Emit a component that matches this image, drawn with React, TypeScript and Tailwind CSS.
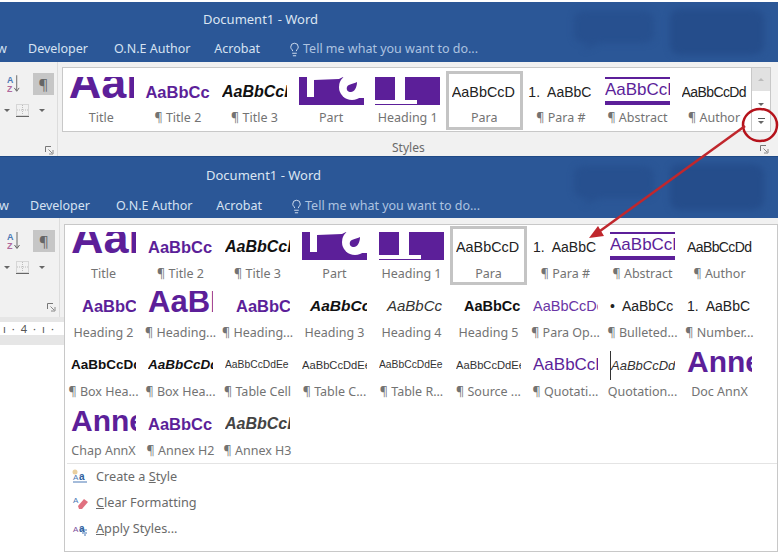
import React from "react";
import { Lightbulb } from "lucide-react";

type Style = { label: string; text?: string; cls?: string; swatch?: "part" | "heading1" | "abstract"; selected?: boolean };

const purple = "text-[#5c1f99]";

const PartSwatch = () => (
  <svg width="65" height="28" viewBox="0 0 65 28" className="block">
    <path d="M0 0H8V20H15V3L40 2L44 0H65V28H0Z" fill="#5c1f99" />
    <path d="M44 0H65V21H60Z" fill="#fff" />
    <circle cx="53" cy="10" r="13" fill="#fff" />
    <path d="M58 5C58 11 55 15 52 15C49 15 47 13 48 10C49 7 54 7 58 5Z" fill="#5c1f99" />
  </svg>
);

const Heading1Swatch = () => (
  <svg width="65" height="28" viewBox="0 0 65 28" className="block">
    <rect width="65" height="28" fill="#5c1f99" />
    <rect x="20" width="10" height="24" fill="#fff" />
    <rect y="23" width="42" height="4" fill="#fff" />
  </svg>
);

const row1: Style[] = [
  { label: "Title", text: "AaBbCc", cls: `text-[45px] font-bold -mt-[9px] ${purple}` },
  { label: "¶ Title 2", text: "AaBbCc", cls: `text-[16.5px] font-bold ${purple}` },
  { label: "¶ Title 3", text: "AaBbCcDd", cls: "text-[16px] font-bold italic text-[#111]" },
  { label: "Part", swatch: "part" },
  { label: "Heading 1", swatch: "heading1" },
  { label: "Para", text: "AaBbCcD", cls: "text-[14.4px] text-[#222]", selected: true },
  { label: "¶ Para #", text: "1.  AaBbC", cls: "text-[14px] text-[#222] whitespace-pre" },
  { label: "¶ Abstract", swatch: "abstract" },
  { label: "¶ Author", text: "AaBbCcDd", cls: "text-[14px] tracking-[-0.6px] text-[#222]" },
];

const row2: Style[] = [
  { label: "Heading 2", text: "AaBbC", cls: `pl-[11px] text-[16.5px] font-bold ${purple}` },
  { label: "¶ Heading...", text: "AaBbCc", cls: `text-[31px] font-bold -mt-[4px] ${purple}` },
  { label: "¶ Heading...", text: "AaBbC", cls: `pl-[11px] text-[16.5px] font-bold ${purple}` },
  { label: "Heading 3", text: "AaBbCc", cls: "pl-[8px] text-[15.5px] font-bold italic text-[#111]" },
  { label: "Heading 4", text: "AaBbCc", cls: "pl-[8px] text-[15px] italic text-[#333]" },
  { label: "Heading 5", text: "AaBbCc", cls: "pl-[8px] text-[14.5px] font-bold text-[#111]" },
  { label: "¶ Para Op...", text: "AaBbCcDd", cls: "text-[14.5px] text-[#6a35a5]" },
  { label: "¶ Bulleted...", text: "•  AaBbCc", cls: "text-[14px] text-[#222] whitespace-pre" },
  { label: "¶ Number...", text: "1.  AaBbC", cls: "text-[14px] text-[#222] whitespace-pre" },
];

const row3: Style[] = [
  { label: "¶ Box Hea...", text: "AaBbCcDd", cls: "text-[13.5px] font-bold text-[#111]" },
  { label: "¶ Box Hea...", text: "AaBbCcDd", cls: "text-[13.5px] font-bold italic text-[#111]" },
  { label: "¶ Table Cell", text: "AaBbCcDdEe", cls: "text-[10.3px] text-[#333]" },
  { label: "¶ Table C...", text: "AaBbCcDdEe", cls: "text-[11.2px] text-[#333]" },
  { label: "¶ Table R...", text: "AaBbCcDdEe", cls: "text-[10.3px] text-[#333]" },
  { label: "¶ Source ...", text: "AaBbCcDdEe", cls: "text-[11.2px] text-[#333]" },
  { label: "¶ Quotati...", text: "AaBbCcDd", cls: `text-[17px] ${purple}` },
  { label: "Quotation...", text: "AaBbCcDdE", cls: "border-l border-[#333] text-[13px] italic leading-[22px] mt-[1px] text-[#333]" },
  { label: "Doc AnnX", text: "Anne", cls: `text-[30px] font-bold -mt-[3px] ${purple}` },
];

const row4: Style[] = [
  { label: "Chap AnnX", text: "Anne", cls: `text-[30px] font-bold -mt-[3px] ${purple}` },
  { label: "¶ Annex H2", text: "AaBbCc", cls: `text-[16.5px] font-bold ${purple}` },
  { label: "¶ Annex H3", text: "AaBbCcDd", cls: "text-[16px] font-bold italic text-[#444]" },
];

const StyleTile = ({ item, labelGap }: { item: Style; labelGap: string }) => (
  <div className={`h-[59px] border-[3px] pt-[3px] ${item.selected ? "border-[#c4c4c4]" : "border-transparent"}`}>
    <div className="mx-auto h-[30px] w-[65px] overflow-hidden whitespace-nowrap font-['Liberation_Sans',sans-serif]">
      {item.swatch === "part" && <PartSwatch />}
      {item.swatch === "heading1" && <Heading1Swatch />}
      {item.swatch === "abstract" && (
        <div className={`h-[28px] border-t-2 border-b-4 border-[#5c1f99] text-[17px] leading-[22px] ${purple}`}>AaBbCcDd</div>
      )}
      {item.text && <div className={`leading-[30px] ${item.cls}`}>{item.text}</div>}
    </div>
    <div className={`h-[20px] whitespace-nowrap text-center text-[12.5px] leading-[20px] text-[#737373] ${labelGap}`}>{item.label}</div>
  </div>
);

const Launcher = () => (
  <svg width="9" height="9" viewBox="0 0 9 9" className="block">
    <path d="M.5 6V.5H6" fill="none" stroke="#777" />
    <path d="M3.5 3.5L7 7M8 4V8H4" fill="none" stroke="#888" />
  </svg>
);

const Caret = () => <span className="block h-0 w-0 border-x-[3px] border-t-[3px] border-x-transparent border-t-[#666]" />;

const SortIcon = () => (
  <svg width="14" height="20" viewBox="0 0 14 20" className="block">
    <text x="0" y="9" fontSize="9" fontWeight="700" fill="#4a79b5" fontFamily="Liberation Sans">A</text>
    <text x="0" y="18" fontSize="9" fontWeight="700" fill="#b0699c" fontFamily="Liberation Sans">Z</text>
    <path d="M10 1V17M7.5 14L10 17.5L12.5 14" fill="none" stroke="#666" />
  </svg>
);

const BorderIcon = () => (
  <svg width="13" height="13" viewBox="0 0 13 13" className="block">
    <rect x=".5" y=".5" width="12" height="11" fill="none" stroke="#bbb" strokeDasharray="1 1" />
    <path d="M6.5 1V11M1 6H12" stroke="#bbb" strokeDasharray="1 1" />
    <path d="M0 12.5H13" stroke="#666" />
  </svg>
);

const LeftTools = ({ pad, width, launcherGap }: { pad: string; width: string; launcherGap: string }) => (
  <div className={`flex h-full flex-col border-r border-[#dcdcdc] pr-[3px] ${pad} ${width}`}>
    <div className="flex items-center gap-[12px]">
      <SortIcon />
      <div className="flex h-[22px] w-[22px] items-center justify-center bg-[#c6c6c6] text-[15px] text-[#666]">¶</div>
    </div>
    <div className="mt-[9px] -ml-[3px] flex items-center gap-[6px]">
      <Caret />
      <BorderIcon />
      <span className="ml-[4px]">
        <Caret />
      </span>
    </div>
    <div className={`mt-auto self-end ${launcherGap}`}>
      <Launcher />
    </div>
  </div>
);

const Clouds = () => (
  <svg width="200" height="50" viewBox="0 0 200 50" className="absolute top-[6px] right-[8px] blur-[3px]">
    <path d="M4 12Q4 3 16 3H72Q84 3 84 12V26Q84 35 72 35H30L14 42L18 35Q4 35 4 26Z" fill="#27508f" />
    <path d="M100 10Q100 1 112 1H180Q194 1 194 12V36Q194 47 180 47H112Q100 47 100 36Z" fill="#254d8b" />
  </svg>
);

const BlueBar = ({ titlePad, tabPad, height, titleTop, tabTop }: { titlePad: string; tabPad: string; height: string; titleTop: string; tabTop: string }) => (
  <div className={`relative flex flex-col overflow-hidden bg-[#2b5797] ${height}`}>
    <Clouds />
    <div className={`relative text-[13px] leading-[20px] text-[#dbe5f2] ${titleTop} ${titlePad}`}>Document1 - Word</div>
    <div className={`relative flex items-center text-[12.5px] leading-[20px] text-[#d6e2f2] ${tabTop} ${tabPad}`}>
      <span className="w-[28px] -translate-x-[3px]">w</span>
      <span className="mr-[26px]">Developer</span>
      <span className="mr-[24px]">O.N.E Author</span>
      <span className="mr-[27px]">Acrobat</span>
      <Lightbulb size={15} strokeWidth={1.5} className="mr-px text-[#d6e2f2]" />
      <span className="text-[#adc3e0]">Tell me what you want to do...</span>
    </div>
  </div>
);

const GalleryScroll = () => (
  <div className="flex w-[19px] flex-col border border-l-0 border-[#c8c8c8] bg-white">
    <div className="flex h-[23px] items-center justify-center bg-[#e1e1e1]">
      <span className="h-0 w-0 border-x-[3px] border-b-[3px] border-x-transparent border-b-[#bbb]" />
    </div>
    <div className="flex h-[19px] items-end justify-center border-b border-[#c8c8c8] pb-[3px]">
      <Caret />
    </div>
    <div className="flex flex-1 flex-col items-center justify-center gap-[2px]">
      <span className="h-px w-[7px] bg-[#555]" />
      <Caret />
    </div>
  </div>
);

const MenuIcon = ({ kind }: { kind: "create" | "clear" | "apply" }) => (
  <svg width="16" height="16" viewBox="0 0 16 16" className="block">
    {kind === "create" && <circle cx="3" cy="3" r="2.5" fill="#e9cf9f" />}
    {kind === "clear" && <path d="M6 11L12 4L16 7L10 14H7Z" fill="#e0707f" />}
    {kind === "apply" && <path d="M9 9H15M10 12H15M12 14H14" stroke="#4a79b5" />}
    <text x="1" y={kind === "clear" ? 8 : 11} fontSize="8" fill={kind === "apply" ? "#7a4d9b" : "#4a79b5"} fontFamily="Liberation Sans">A</text>
    {kind !== "clear" && <text x="7" y="11" fontSize="10" fontWeight="700" fill="#2f5f9e" fontFamily="Liberation Sans">a</text>}
    {kind === "create" && <path d="M1 13H15" stroke="#4a79b5" />}
  </svg>
);

const MenuItem = ({ kind, children }: { kind: "create" | "clear" | "apply"; children: React.ReactNode }) => (
  <div className="flex h-[26px] items-center pl-[5px] text-[12.7px] text-[#6a6a6a]">
    <span className="mr-[8px] w-[16px]">
      <MenuIcon kind={kind} />
    </span>
    <span>{children}</span>
  </div>
);

export default function App() {
  return (
    <div className="relative h-[553px] w-[780px] overflow-hidden bg-white font-['Noto_Sans',sans-serif]">
      <div className="w-[778px] pt-[2px]">
        {/* first window, collapsed gallery */}
        <BlueBar height="h-[60px]" titleTop="pt-[7px]" tabTop="mt-[10px]" titlePad="pl-[203px]" tabPad="pl-0" />
        <div className="flex h-[95px] border-b border-[#1f4a86] bg-[#f1f1f1]">
          <LeftTools width="w-[58px]" pad="pl-[7px] pt-[11px]" launcherGap="mb-[1px]" />
          <div className="flex flex-1 flex-col">
            <div className="mt-[5px] ml-[4px] flex h-[65px]">
              <div className="grid w-[690px] grid-cols-[repeat(9,76.6px)] border border-[#c8c8c8] bg-white pt-[3px]">
                {row1.map((item) => (
                  <StyleTile key={item.label} item={item} labelGap="mt-px" />
                ))}
              </div>
              <GalleryScroll />
            </div>
            <div className="flex flex-1 items-end pr-[9px]">
              <div className="w-[334px]" />
              <span className="flex-1 text-[12px] leading-[16px] text-[#6a6a6a]">Styles</span>
              <div className="pb-[2px]">
                <Launcher />
              </div>
            </div>
          </div>
        </div>

        {/* second window, expanded gallery */}
        <BlueBar height="h-[61px]" titleTop="pt-[8px]" tabTop="mt-[11px]" titlePad="pl-[206px]" tabPad="pl-[2px]" />
        <div className="flex h-[334px]">
          <div className="flex w-[64px] flex-col">
            <div className="h-[99px] bg-[#f1f1f1]">
              <LeftTools width="w-[60px]" pad="pl-[7px] pt-[12px]" launcherGap="mb-[5px]" />
            </div>
            <div className="h-[5px] bg-[#e6e6e6]" />
            <div className="flex h-[13px] items-center gap-[6px] bg-white pl-[3px] text-[11px] leading-none text-[#555]">
              <span>ı</span>
              <span>·</span>
              <span>4</span>
              <span>·</span>
              <span>ı</span>
              <span>·</span>
            </div>
            <div className="h-[10px] bg-[#e6e6e6]" />
          </div>
          <div className="flex-1 bg-[#f1f1f1]">
            <div className="h-[6px]" />
            <div className="flex h-[328px] flex-col border border-[#c8c8c8] bg-white">
              <div className="grid grid-cols-[repeat(9,77px)] pt-px">
                {[...row1, ...row2, ...row3, ...row4].map((item, i) => (
                  <StyleTile key={i} item={item} labelGap="mt-[2px]" />
                ))}
              </div>
              <div className="mt-[1px] ml-[2px] flex-1 border-t border-[#e4e4e4]">
                <MenuItem kind="create">
                  Create a <span className="underline">S</span>tyle
                </MenuItem>
                <MenuItem kind="clear">
                  <span className="underline">C</span>lear Formatting
                </MenuItem>
                <MenuItem kind="apply">
                  <span className="underline">A</span>pply Styles...
                </MenuItem>
              </div>
            </div>
          </div>
        </div>
      </div>

      {/* hand-drawn callout over the two screenshots */}
      <svg width="780" height="553" viewBox="0 0 780 553" className="pointer-events-none absolute top-0 left-0">
        <ellipse cx="760" cy="125" rx="17" ry="16" fill="none" stroke="#b5121b" strokeWidth="2.5" />
        <path d="M745 126L600 231" stroke="#c0272d" strokeWidth="2.5" />
        <path d="M589 238L604 236L598 226Z" fill="#c0272d" />
      </svg>
    </div>
  );
}
